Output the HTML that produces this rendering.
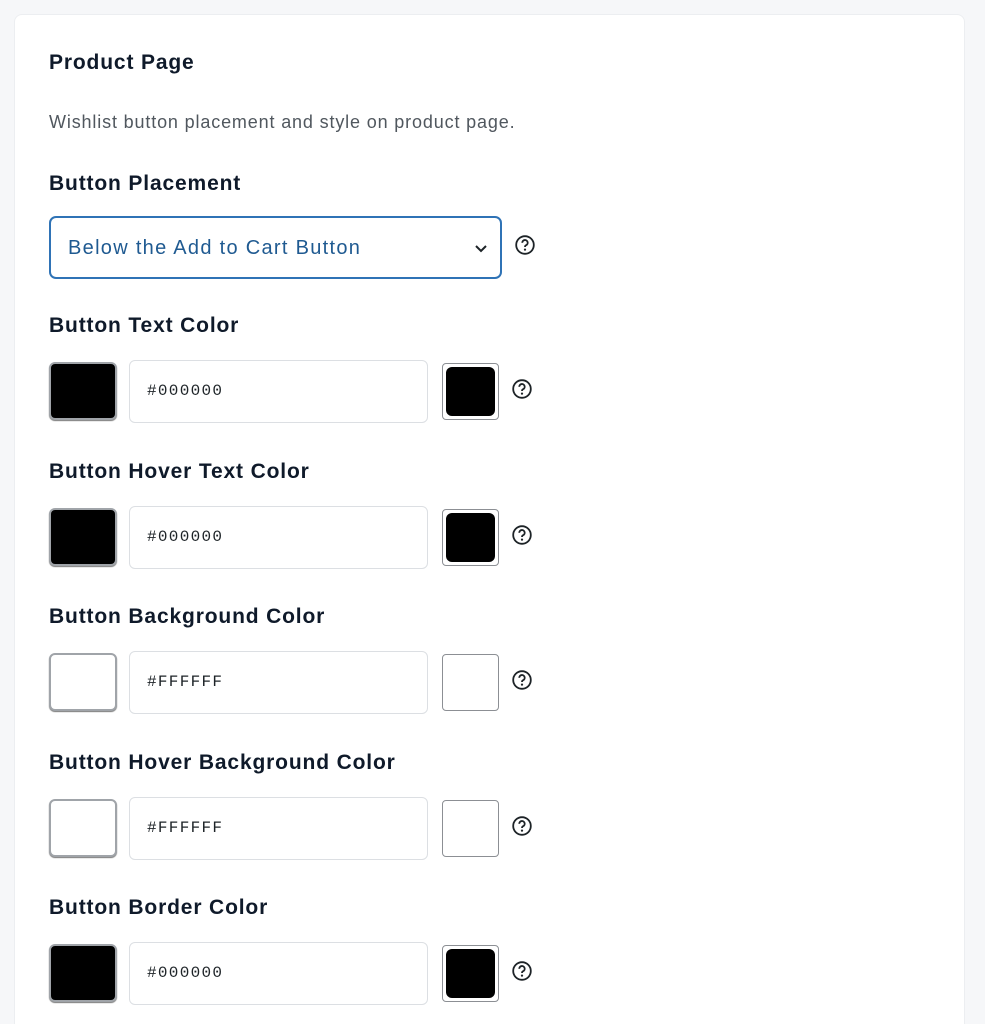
<!DOCTYPE html>
<html style="overflow:hidden;height:1024px"><head><style>
body{margin:0;background:#f6f7f9;width:985px;height:1024px;overflow:hidden;font-family:"Liberation Sans",sans-serif;color:#1d2327;position:relative}
.card{position:absolute;left:14px;top:14px;width:949px;height:1030px;background:#fff;border:1px solid #eceef1;border-radius:8px}
.a{position:absolute;left:49px;white-space:nowrap}
.h{font-size:21px;font-weight:bold;color:#0f1a2a;letter-spacing:0.85px}
.d{font-size:18px;color:#50575e;letter-spacing:0.85px}
.sel{position:absolute;left:49px;top:216px;width:449px;height:59px;border:2px solid #2f73b6;border-radius:7px;color:#1f5a91;font-size:20px;line-height:61px;letter-spacing:1.3px}
.sel span{position:absolute;left:17px}
.q{position:absolute;width:20px;height:20px}
.sw{position:absolute;left:49px;width:64px;height:54px;border:2px solid #a0a4a9;border-radius:6px;box-shadow:0 1px 1px #777}
.in{position:absolute;left:129px;width:297px;height:61px;border:1px solid #dcdfe3;border-radius:6px;font-family:"Liberation Mono",monospace;font-size:16px;color:#1d2327;line-height:61px;text-indent:17px;letter-spacing:1.3px}
.sw2{position:absolute;left:442px;width:55px;height:55px;border:1px solid #8c8f94;border-radius:4px;background:#fff}
.sw2 i{position:absolute;left:3px;top:3px;right:3px;bottom:3px;border-radius:6px}
</style></head><body>
<div class="card"></div>
<div class="a h" style="top:51px">Product Page</div>
<div class="a d" style="top:112px">Wishlist button placement and style on product page.</div>
<div class="a h" style="top:172px">Button Placement</div>
<div class="sel"><span>Below the Add to Cart Button</span>
<svg style="position:absolute;right:12px;top:26px" width="14" height="10" viewBox="0 0 14 10"><path d="M2 2l5 5 5-5" fill="none" stroke="#1d2327" stroke-width="2"/></svg></div>
<svg class="q" style="left:515px;top:235px" viewBox="0 0 20 20"><circle cx="10" cy="10" r="8.8" fill="none" stroke="#1d2327" stroke-width="1.8"/><path d="M7.3 7.8a2.7 2.7 0 1 1 3.8 2.4c-.8.4-1.1.9-1.1 1.8" fill="none" stroke="#1d2327" stroke-width="1.8"/><circle cx="10" cy="14.6" r="1.1" fill="#1d2327"/></svg>

<div id="rows"></div>
<script>
var rows=[["Button Text Color","#000000","#000"],["Button Hover Text Color","#000000","#000"],["Button Background Color","#FFFFFF","#fff"],["Button Hover Background Color","#FFFFFF","#fff"],["Button Border Color","#000000","#000"]];
var h="";
rows.forEach(function(r,i){var y=Math.round(i*145.6);
h+='<div class="a h" style="top:'+(314+y)+'px">'+r[0]+'</div>';
h+='<div class="sw" style="top:'+(362+y)+'px;background:'+r[2]+'"></div>';
h+='<div class="in" style="top:'+(360+y)+'px">'+r[1]+'</div>';
h+='<div class="sw2" style="top:'+(363+y)+'px">'+(r[2]=="#000"?'<i style="background:#000"></i>':'')+'</div>';
h+='<svg class="q" style="left:512px;top:'+(379+y)+'px" viewBox="0 0 20 20"><circle cx="10" cy="10" r="8.8" fill="none" stroke="#1d2327" stroke-width="1.8"/><path d="M7.3 7.8a2.7 2.7 0 1 1 3.8 2.4c-.8.4-1.1.9-1.1 1.8" fill="none" stroke="#1d2327" stroke-width="1.8"/><circle cx="10" cy="14.6" r="1.1" fill="#1d2327"/></svg>';});
document.getElementById("rows").innerHTML=h;
</script>
</body></html>
